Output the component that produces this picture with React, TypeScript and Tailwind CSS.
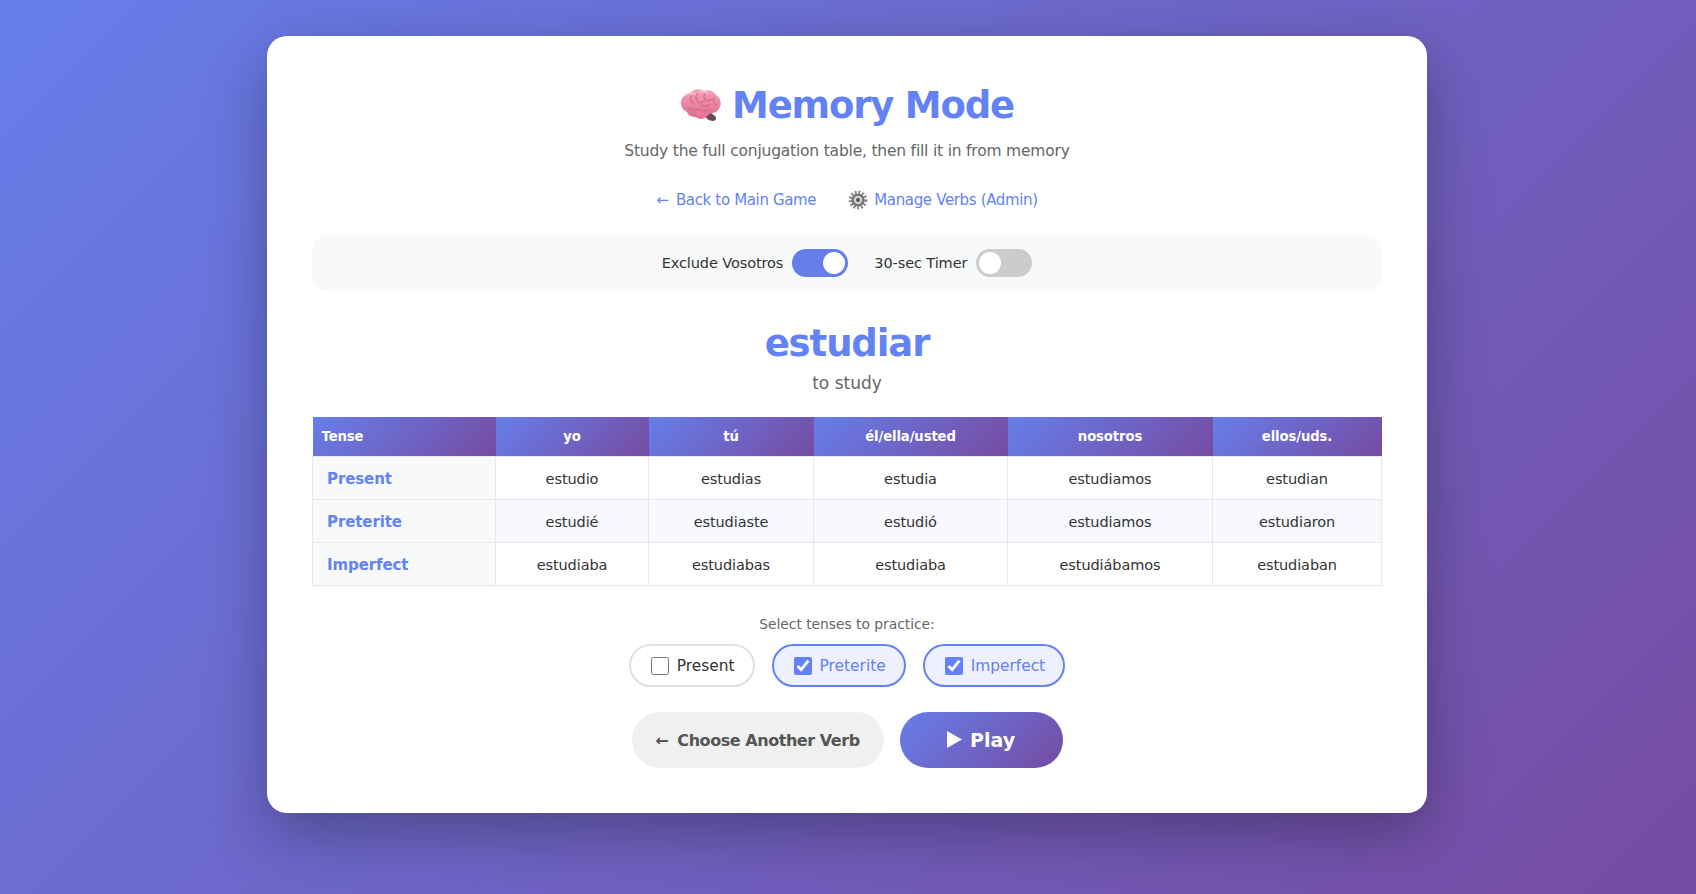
import { useState } from 'react'

const rows = [
    { tense: 'Present', forms: ['estudio', 'estudias', 'estudia', 'estudiamos', 'estudian'] },
    { tense: 'Preterite', forms: ['estudié', 'estudiaste', 'estudió', 'estudiamos', 'estudiaron'] },
    { tense: 'Imperfect', forms: ['estudiaba', 'estudiabas', 'estudiaba', 'estudiábamos', 'estudiaban'] },
]

const heads = ['yo', 'tú', 'él/ella/usted', 'nosotros', 'ellos/uds.']
const headGradient = 'bg-[linear-gradient(135deg,#667eea_0%,#764ba2_100%)]'

function BrainIcon() {
    return (
        <svg viewBox="0 0 42 34" className="w-[42px] h-[34px] shrink-0">
            <defs>
                <linearGradient id="brain" x1="0" y1="0" x2="0" y2="1">
                    <stop offset="0" stopColor="#f3a3b9" />
                    <stop offset="1" stopColor="#e0698d" />
                </linearGradient>
            </defs>
            <path d="M24 27c2 3 5 6 9 6 3 0 4-3 2-5l-4-3z" fill="#6e4a52" />
            <path d="M1 17C0 11 4 6 10 5c3-4 10-5 14-2 4-2 10 0 12 4 4 2 6 8 4 12-2 5-7 7-11 6-1 5-9 8-13 4-3 0-8-1-9-5-2-1-5-3-6-7z" fill="url(#brain)" />
            <path d="M8 20c3 2 7 2 10 1 3 2 7 2 10 1M11 8c-1 3 0 6 3 7M17 6c-2 3-1 6 1 8 2 1 4 1 6-1M25 6c-2 2-1 4 1 6 2 1 4 1 6-1M34 10c-1 3 0 6 2 8M21 17c3 1 7 1 9-1" stroke="#d9668a" strokeWidth="1.2" fill="none" strokeLinecap="round" />
            <path d="M18 23c4 0 9 1 11 2-1 4-7 6-10 4-2-1-3-5-1-6z" fill="#e9789a" />
            <path d="M6 7c3-2 7-2 9-1M20 4c3-1 6 0 8 1" stroke="#f9c9d6" strokeWidth="1.4" fill="none" strokeLinecap="round" />
        </svg>
    )
}

function GearIcon() {
    return (
        <svg viewBox="0 0 20 20" className="w-5 h-5 shrink-0">
            <circle cx="10" cy="10" r="7.6" fill="none" stroke="#8a8a8e" strokeWidth="3.6" strokeDasharray="1.9 1.7" />
            <circle cx="10" cy="10" r="6.6" fill="#77777c" />
            <circle cx="10" cy="10" r="4" fill="#d6d6d8" />
            <circle cx="10" cy="10" r="1.9" fill="#4a4a4e" />
        </svg>
    )
}

function Toggle({ on, onClick }: { on: boolean; onClick: () => void }) {
    return (
        <button
            onClick={onClick}
            className={`flex items-center w-14 h-7 rounded-full p-[3px] ${on ? 'bg-[#667eea] justify-end' : 'bg-[#cccccc] justify-start'}`}
        >
            <span className="block w-[22px] h-[22px] rounded-full bg-white" />
        </button>
    )
}

function TenseChip({ label, checked, onClick }: { label: string; checked: boolean; onClick: () => void }) {
    return (
        <label
            className={`flex items-center gap-[8px] h-[43px] pl-[20px] pr-[18px] rounded-[25px] border-2 text-[15.4px] cursor-pointer ${
                checked ? 'border-[#6382f5] bg-[#eef0fd] text-[#6382f5]' : 'border-[#e0e0e0] bg-white text-[#333333]'
            }`}
        >
            <input type="checkbox" checked={checked} onChange={onClick} className="w-[18px] h-[18px] mt-[1px] accent-[#6382f5]" />
            <span className="pt-[3px]">{label}</span>
        </label>
    )
}

export default function App() {
    const [excludeVosotros, setExcludeVosotros] = useState(true)
    const [timer, setTimer] = useState(false)
    const [tenses, setTenses] = useState({ Present: false, Preterite: true, Imperfect: true })

    const toggleTense = (name: 'Present' | 'Preterite' | 'Imperfect') => {
        setTenses({ ...tenses, [name]: !tenses[name] })
    }

    return (
        <div className="h-[894px] overflow-hidden pt-9 pl-[267px] bg-[linear-gradient(135deg,#667eea_0%,#764ba2_100%)] font-['DejaVu_Sans',sans-serif]">
            <div className="w-[1160px] h-[777px] bg-white rounded-[20px] shadow-[0_20px_60px_rgba(0,0,0,0.3)] px-[45px] pt-[45px] text-center">
                {/* Header */}
                <h1 className="flex items-center justify-center gap-[11px] h-[48px] text-[37px] tracking-[-1.2px] font-bold text-[#6382f5]">
                    <BrainIcon />
                    <span className="pt-[2px] -ml-[1px]">Memory Mode</span>
                </h1>
                <p className="mt-[10px] text-[15.5px] tracking-[-0.2px] leading-[24px] text-[#666666]">Study the full conjugation table, then fill it in from memory</p>

                <div className="flex items-center justify-center gap-8 mt-[25px] h-[24px] text-[15px] tracking-[-0.35px] text-[#6382f5]">
                    <a href="#"><span className="mr-[3px]">←</span> Back to Main Game</a>
                    <a href="#" className="flex items-center gap-[6px]">
                        <GearIcon />
                        Manage Verbs (Admin)
                    </a>
                </div>

                {/* Options */}
                <div className="flex items-center justify-center gap-[26px] mt-[23px] h-[56px] rounded-[15px] bg-[#f8f9fa] text-[14.5px] tracking-[-0.1px] text-[#333333]">
                    <div className="flex items-center gap-[9px]">
                        <span className="pt-[2px]">Exclude Vosotros</span>
                        <Toggle on={excludeVosotros} onClick={() => setExcludeVosotros(!excludeVosotros)} />
                    </div>
                    <div className="flex items-center gap-[9px]">
                        <span className="pt-[2px]">30-sec Timer</span>
                        <Toggle on={timer} onClick={() => setTimer(!timer)} />
                    </div>
                </div>

                {/* Verb */}
                <h2 className="mt-[26px] text-[37px] tracking-[-1.1px] leading-[54px] font-bold text-[#6382f5]">estudiar</h2>
                <p className="text-[17px] leading-[24px] text-[#666666]">to study</p>

                {/* Conjugation table */}
                <table className="mt-[22px] w-[1069px] table-fixed border-collapse text-[14.5px] tracking-[-0.1px] text-[#333333]">
                    <colgroup>
                        <col className="w-[183px]" />
                        <col className="w-[153px]" />
                        <col className="w-[165px]" />
                        <col className="w-[194px]" />
                        <col className="w-[205px]" />
                        <col className="w-[169px]" />
                    </colgroup>
                    <thead>
                        <tr className="h-[39px] text-[13.2px] font-bold text-white">
                            <th className={`${headGradient} text-left pl-[9px] pt-[2px]`}>Tense</th>
                            {heads.map((h) => (
                                <th key={h} className={`${headGradient} pt-[2px]`}>{h}</th>
                            ))}
                        </tr>
                    </thead>
                    <tbody>
                        {rows.map((row, i) => (
                            <tr key={row.tense} className={`h-[43px] ${i === 1 ? 'bg-[#f8f9ff]' : 'bg-white'}`}>
                                <td className="border border-[#e8e8e8] bg-[#f8f9fa] text-left pl-[14px] pt-[3px] text-[15px] tracking-[-0.1px] font-bold text-[#6382f5]">{row.tense}</td>
                                {row.forms.map((f, j) => (
                                    <td key={j} className="border border-[#e8e8e8] pt-[4px]">{f}</td>
                                ))}
                            </tr>
                        ))}
                    </tbody>
                </table>

                {/* Tense picker */}
                <p className="mt-[27px] text-[13.8px] leading-[22px] text-[#666666]">Select tenses to practice:</p>
                <div className="flex justify-center gap-[17px] mt-[9px]">
                    <TenseChip label="Present" checked={tenses.Present} onClick={() => toggleTense('Present')} />
                    <TenseChip label="Preterite" checked={tenses.Preterite} onClick={() => toggleTense('Preterite')} />
                    <TenseChip label="Imperfect" checked={tenses.Imperfect} onClick={() => toggleTense('Imperfect')} />
                </div>

                {/* Actions */}
                <div className="flex justify-center gap-4 mt-[25px]">
                    <button className="h-[56px] w-[252px] pt-[2px] rounded-[30px] bg-[#f0f0f0] text-[16px] tracking-[-0.45px] font-bold text-[#555555]"><span className="mr-[4px]">←</span> Choose Another Verb</button>
                    <button className={`flex items-center justify-center gap-[8px] h-[56px] w-[163px] rounded-[30px] ${headGradient} text-[19px] font-bold text-white`}>
                        <svg viewBox="0 0 15 17" className="w-[15px] h-[17px]">
                            <path d="M0 0 L15 8.5 L0 17 Z" fill="#ffffff" />
                        </svg>
                        <span className="pt-[2px]">Play</span>
                    </button>
                </div>
            </div>
        </div>
    )
}
